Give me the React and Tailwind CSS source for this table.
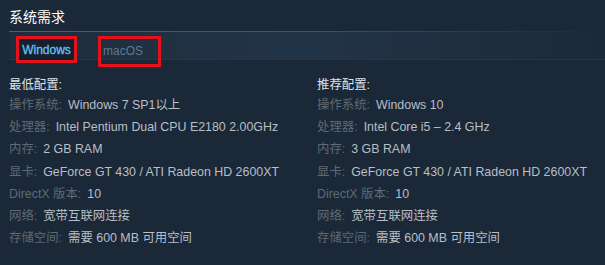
export default function App() {
  const font = { fontFamily: '"Liberation Sans", Arial, "Noto Sans CJK SC", sans-serif' };
  const left = [
    ["操作系统:", "Windows 7 SP1以上"],
    ["处理器:", "Intel Pentium Dual CPU E2180 2.00GHz"],
    ["内存:", "2 GB RAM"],
    ["显卡:", "GeForce GT 430 / ATI Radeon HD 2600XT"],
    ["DirectX 版本:", "10"],
    ["网络:", "宽带互联网连接"],
    ["存储空间:", "需要 600 MB 可用空间"],
  ];
  const right = [
    ["操作系统:", "Windows 10"],
    ["处理器:", "Intel Core i5 – 2.4 GHz"],
    ["内存:", "3 GB RAM"],
    ["显卡:", "GeForce GT 430 / ATI Radeon HD 2600XT"],
    ["DirectX 版本:", "10"],
    ["网络:", "宽带互联网连接"],
    ["存储空间:", "需要 600 MB 可用空间"],
  ];
  const Col = ({ title, rows }) => (
    <div className="flex flex-col">
      <div className="h-[18px] leading-[18px] text-[12.4px] text-[#dfe3e6]">{title}</div>
      {rows.map(([k, v]) => (
        <div key={k} className="h-[22.2px] leading-[22px] text-[12.4px] whitespace-nowrap">
          <span className="text-[#5f6a74]">{k}</span>
          <span className="text-[#b8bfc6] ml-[6px]">{v}</span>
        </div>
      ))}
    </div>
  );
  return (
    <div className="w-[605px] h-[265px] bg-[#1b2838] overflow-hidden" style={font}>
      <div className="pl-[9px] pt-[8px] h-[31px] text-[14px] leading-[18px] text-white">系统需求</div>
      <div className="ml-[9px] h-px bg-gradient-to-r from-[#46607a] via-[#3a5470] to-transparent" />
      <div className="ml-[9px] h-[28px] bg-gradient-to-r from-[#1e2d3d] via-[#223447] to-[#1c2938] border-b border-[#24364a] flex items-start relative">
        <div className="absolute left-[7px] top-[4px] w-[61px] h-[27px] border-[3px] border-[#e5121b] bg-[#15202c] flex items-center justify-center">
          <span className="text-[12px] text-[#66c0f4] [-webkit-text-stroke:0.3px_#66c0f4]">Windows</span>
        </div>
        <div className="absolute left-[89px] top-[4px] w-[63px] h-[31px] border-[3px] border-[#e5121b] flex items-start">
          <span className="text-[12px] text-[#5c7a94] pl-[2px] pt-[3px]">macOS</span>
        </div>
      </div>
      <div className="flex pl-[9px] pt-[16px]">
        <div className="w-[308px]"><Col title="最低配置:" rows={left} /></div>
        <div><Col title="推荐配置:" rows={right} /></div>
      </div>
    </div>
  );
}
